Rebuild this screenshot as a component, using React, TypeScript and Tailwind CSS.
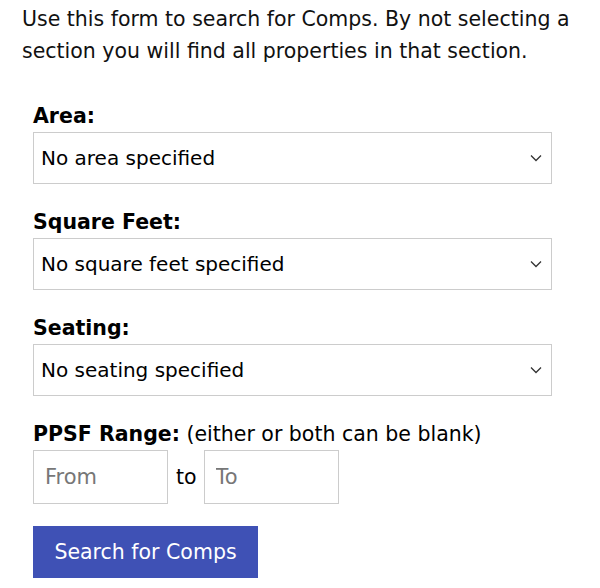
export default function App() {
  return (
    <div className="bg-white text-black font-['DejaVu_Sans',Verdana,sans-serif] text-[20.5px] leading-[32px] px-[22px] pt-[3px] min-h-screen">
      <p className="text-[#111]">
        Use this form to search for Comps. By not selecting a section you will find all properties in that section.
      </p>

      <form className="ml-[11px] mt-[33px] w-[519px]" onSubmit={(e) => e.preventDefault()}>
        <SelectField label="Area:" value="No area specified" />
        <SelectField label="Square Feet:" value="No square feet specified" />
        <SelectField label="Seating:" value="No seating specified" />

        <div>
          <div>
            <span className="font-bold">PPSF Range:</span> (either or both can be blank)
          </div>
          <div className="flex items-center">
            <input
              placeholder="From"
              className="w-[135px] h-[54px] border border-[#ccc] px-[11px] outline-none placeholder:text-[#777] text-[21px]"
            />
            <span className="pl-[8px] pr-[7px]">to</span>
            <input
              placeholder="To"
              className="w-[135px] h-[54px] border border-[#ccc] px-[11px] outline-none placeholder:text-[#777] text-[21px]"
            />
          </div>
        </div>

        <button
          type="submit"
          className="mt-[22px] h-[52px] w-[225px] bg-[#3f51b5] text-white text-[20.5px]"
        >
          Search for Comps
        </button>
      </form>
    </div>
  );
}

function SelectField({ label, value }: { label: string; value: string }) {
  return (
    <div className="mb-[22px]">
      <div className="font-bold">{label}</div>
      <div className="h-[52px] border border-[#ccc] flex items-center justify-between pl-[7px] pr-[8px] text-[20px]">
        <span>{value}</span>
        <svg width="12" height="8" viewBox="0 0 12 8" className="mr-[1px]">
          <path d="M1 1.5 L6 6.5 L11 1.5" fill="none" stroke="#333" strokeWidth="1.3" />
        </svg>
      </div>
    </div>
  );
}
